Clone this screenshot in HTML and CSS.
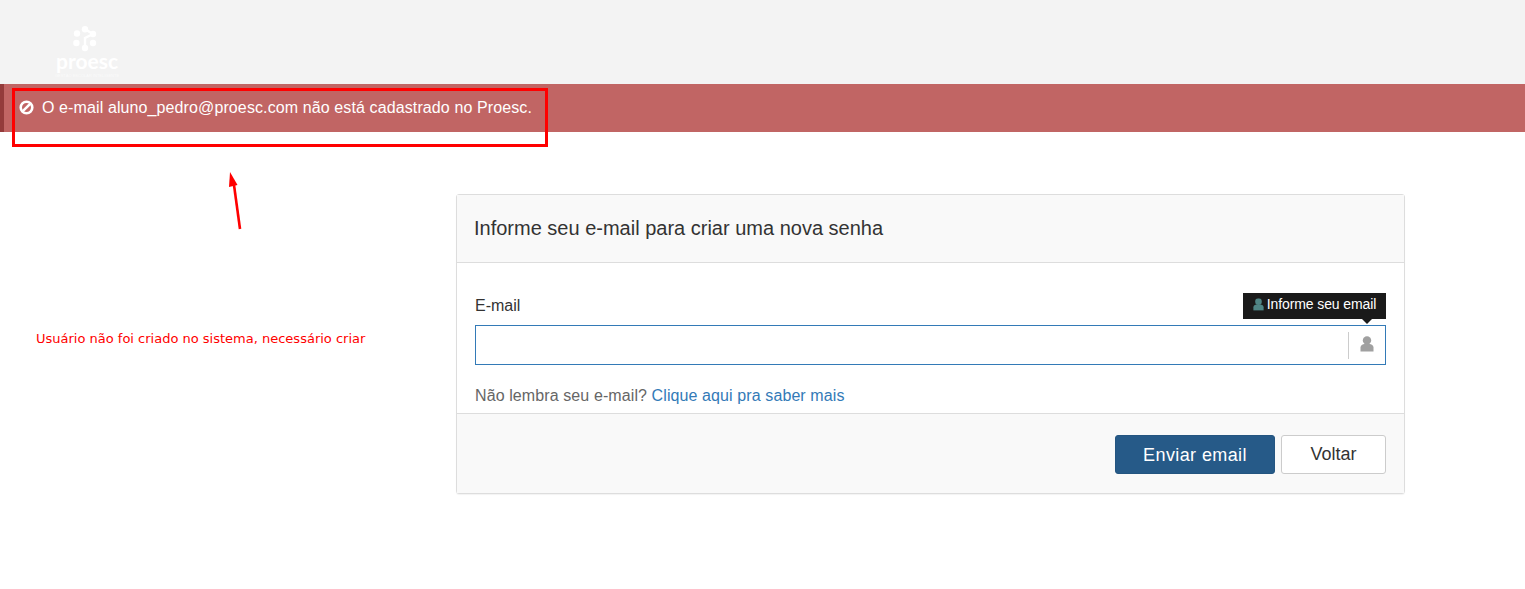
FILE: index.html
```html
<!DOCTYPE html>
<html lang="pt-BR">
<head>
<meta charset="utf-8">
<title>Proesc</title>
<link rel="stylesheet" href="styles.css">
</head>
<body>
<header class="topbar">
  <div class="logo">
    <svg class="logo-mark" width="26" height="26" viewBox="0 0 26 26" aria-hidden="true">
      <g fill="#fff">
        <circle cx="13" cy="3.2" r="3.2"/><circle cx="5" cy="7.5" r="3.2"/><circle cx="21" cy="8" r="3.2"/>
        <circle cx="4.4" cy="17" r="3.2"/><circle cx="21" cy="17" r="3.2"/><circle cx="13" cy="22" r="3.2"/>
        <path d="M13 3.2 L21 8 L13 12 L13 22" stroke="#fff" stroke-width="2.4" fill="none"/>
      </g>
    </svg>
    <div class="logo-name">proesc</div>
    <div class="logo-tag">GESTÃO ESCOLAR INTELIGENTE</div>
  </div>
</header>
<div class="alert">
  <svg class="alert-icon" width="15" height="15" viewBox="0 0 15 15" aria-hidden="true">
    <circle cx="7.5" cy="7.5" r="5.8" fill="none" stroke="#fff" stroke-width="2.6"/>
    <path d="M3.6 11.4 L11.4 3.6" stroke="#fff" stroke-width="2.6"/>
  </svg>
  <span>O e-mail aluno_pedro@proesc.com não está cadastrado no Proesc.</span>
</div>
<main class="content">
  <section class="card">
    <div class="card-head">Informe seu e-mail para criar uma nova senha</div>
    <div class="card-body">
      <div class="field-top">
        <label class="field-label" for="email">E-mail</label>
        <div class="tip">
          <svg class="user-icon" width="11" height="13" viewBox="0 0 14 16" aria-hidden="true"><use href="#user"/></svg>
          <span>Informe seu email</span>
        </div>
      </div>
      <div class="input-wrap">
        <input class="input" id="email" type="text">
        <span class="addon">
          <svg width="14" height="16" viewBox="0 0 14 16" aria-hidden="true"><use href="#user"/></svg>
        </span>
      </div>
      <p class="hint">Não lembra seu e-mail? <a href="#">Clique aqui pra saber mais</a></p>
    </div>
    <div class="card-foot">
      <button class="btn btn-primary" type="button">Enviar email</button>
      <button class="btn btn-default" type="button">Voltar</button>
    </div>
  </section>
</main>
<div class="note-box"></div>
<svg class="note-arrow" width="20" height="62" viewBox="0 0 20 62" aria-hidden="true">
  <path d="M12 58 L6 14" stroke="#f00" stroke-width="2.6" fill="none"/>
  <path d="M2 1 L1 16 L9.5 14 Z" fill="#f00"/>
</svg>
<div class="note-text">Usuário não foi criado no sistema, necessário criar</div>
<svg class="defs" width="0" height="0" aria-hidden="true">
  <symbol id="user" viewBox="0 0 14 16">
    <circle cx="7" cy="4.4" r="4.2" fill="currentColor"/>
    <path d="M0.5 15.5 V11.5 C0.5 9.2 2.6 8 4.5 8 H9.5 C11.4 8 13.5 9.2 13.5 11.5 V15.5 Z" fill="currentColor"/>
  </symbol>
</svg>
</body>
</html>
```

FILE: styles.css
```css
* { box-sizing: border-box; }
html, body { margin: 0; padding: 0; }
body {
  background: #fff;
  font-family: "Liberation Sans", Arial, sans-serif;
  color: #333;
  height: 589px;
  overflow: hidden;
  position: relative;
}
.topbar {
  height: 84px;
  background: #f3f3f3;
  padding: 26px 0 0 52px;
}
.logo {
  width: 70px;
  display: flex;
  flex-direction: column;
  align-items: center;
  color: #fff;
}
.logo-mark { display: block; margin-right: 4px; }
.logo-name {
  font-family: Lato, sans-serif;
  font-size: 21px;
  line-height: 18px;
  font-weight: 700;
  margin: 0 0 0 0;
}
.logo-tag {
  font-size: 4px;
  line-height: 6px;
  margin: 3px 0 0 0;
  white-space: nowrap;
  opacity: 0.7;
}
.alert {
  height: 48px;
  background: #c16564;
  border-left: 4px solid #943b3b;
  color: #fff;
  font-size: 16px;
  letter-spacing: 0.11px;
  display: flex;
  align-items: flex-start;
  padding: 15px 0 0 15px;
  line-height: 18px;
  gap: 8px;
}
.alert-icon { margin-top: 1px; flex: none; }
.content {
  padding: 62px 120px 0 456px;
}
.card {
  width: 949px;
  height: 300px;
  border: 1px solid #ddd;
  border-radius: 3px;
  box-shadow: 0 1px 1px rgba(0,0,0,.05);
  display: flex;
  flex-direction: column;
  background: #fff;
}
.card-head {
  height: 68px;
  background: #f9f9f9;
  border-bottom: 1px solid #ddd;
  font-size: 20px;
  line-height: 20px;
  color: #333;
  padding: 23px 0 0 17px;
}
.card-body {
  height: 150px;
  padding: 30px 18px 0;
}
.field-top {
  display: flex;
  justify-content: space-between;
  align-items: flex-start;
  height: 32px;
}
.field-label {
  font-size: 16px;
  line-height: 26px;
}
.tip {
  position: relative;
  height: 26px;
  width: 143px;
  background: #1a1a1a;
  color: #fff;
  font-size: 14px;
  letter-spacing: -0.1px;
  line-height: 23px;
  display: flex;
  align-items: flex-start;
  justify-content: center;
  gap: 3px;
}
.tip::after {
  content: "";
  position: absolute;
  right: 14px;
  bottom: -5px;
  border-left: 5px solid transparent;
  border-right: 5px solid transparent;
  border-top: 5px solid #1a1a1a;
}
.tip .user-icon { color: #4f8585; margin-top: 5px; }
.input-wrap {
  height: 40px;
  border: 1px solid #337ab7;
  display: flex;
  align-items: center;
}
.input {
  flex: 1;
  height: 100%;
  border: 0;
  outline: 0;
  background: transparent;
  min-width: 0;
}
.addon {
  width: 37px;
  height: 27px;
  border-left: 1px solid #ccc;
  color: #a0a0a0;
  display: flex;
  align-items: center;
  justify-content: center;
  padding-bottom: 2px;
}
.hint {
  margin: 21px 0 0;
  font-size: 16px;
  letter-spacing: 0.1px;
  line-height: 20px;
  color: #666;
}
.hint a { color: #337ab7; text-decoration: none; }
.card-foot {
  flex: 1;
  background: #f9f9f9;
  border-top: 1px solid #ddd;
  display: flex;
  justify-content: flex-end;
  align-items: flex-start;
  padding: 21px 18px 0 0;
  gap: 6px;
}
.btn {
  height: 39px;
  font-family: inherit;
  font-size: 18px;
  border-radius: 3px;
  padding: 0;
}
.btn-primary {
  width: 160px;
  background: #265a88;
  border: 1px solid #245580;
  color: #fff;
  letter-spacing: 0.4px;
  padding-top: 1px;
}
.btn-default {
  width: 105px;
  background: #fff;
  border: 1px solid #ccc;
  color: #333;
  padding-bottom: 1px;
}
.note-box {
  position: absolute;
  left: 12px;
  top: 88px;
  width: 536px;
  height: 59px;
  border: 3px solid #f00;
}
.note-arrow {
  position: absolute;
  left: 228px;
  top: 171px;
}
.note-text {
  position: absolute;
  left: 36px;
  top: 331px;
  font-family: "DejaVu Sans", sans-serif;
  font-size: 13px;
  line-height: 16px;
  color: #f00;
  white-space: nowrap;
}
.defs { position: absolute; }
```
